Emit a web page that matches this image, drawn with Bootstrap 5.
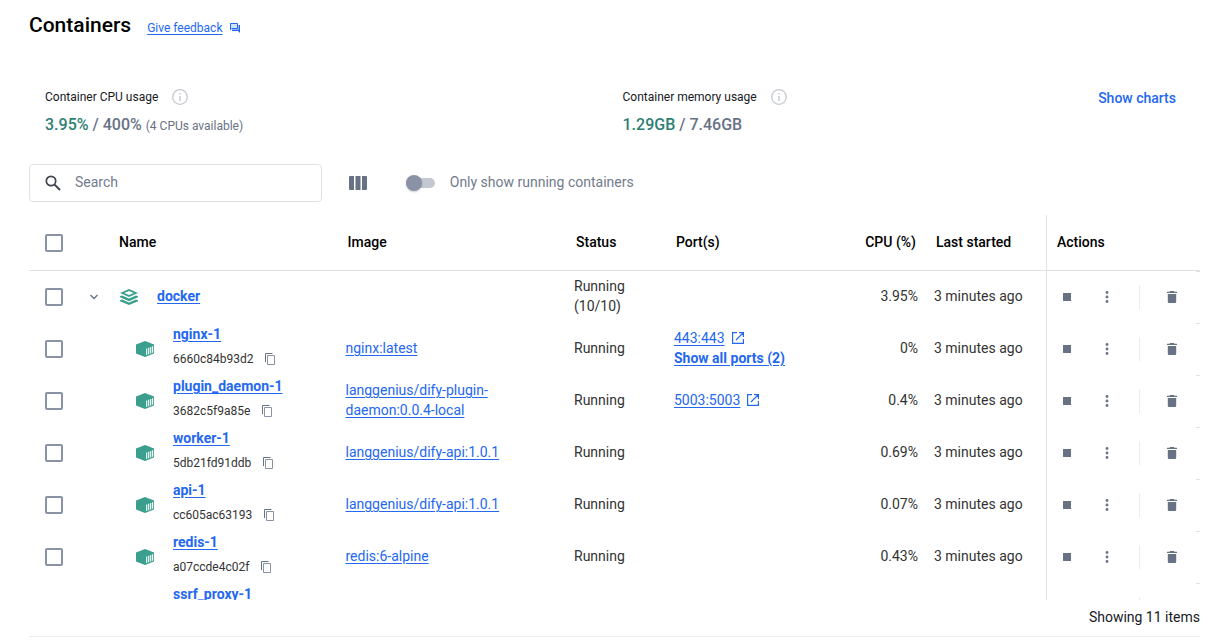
<!DOCTYPE html>
<html lang="en">
<head>
<meta charset="utf-8">
<meta name="viewport" content="width=device-width, initial-scale=1">
<title>Containers</title>
<link rel="stylesheet" href="https://cdn.jsdelivr.net/npm/bootstrap@5.3.0/dist/css/bootstrap.min.css">
<style>
  :root { --blue: #2468f0; --slate: #677285; --slate-light: #8993a5; --teal: #3a9f8c; --line: #e1e1e1; }
  body { font-family: Roboto, "Liberation Sans", sans-serif; font-size: 14px; line-height: 20px; color: #333; background: #fff; }
  a { color: var(--blue); text-underline-offset: 2px; }
  a:hover { color: #1a47b8; }
  svg { display: block; flex: none; fill: currentColor; }
  .page { padding: 11px 29px 6px; }
  .title { font-size: 21px; line-height: 28px; font-weight: 500; color: #000; }
  .feedback { font-size: 12px; padding-top: 6px; color: var(--blue); }
  .stats { display: grid; grid-template-columns: 1fr 1fr; column-gap: 16px; margin-top: 48px; }
  .stat-label { font-size: 12px; color: #17191e; gap: 14px; }
  .stat-value { font-size: 16px; line-height: 24px; font-weight: 500; color: var(--slate); margin-top: 6px; }
  .stat-value .used { color: #2e7f74; }
  .stat-value .note { font-size: 12px; font-weight: 400; }
  .info { color: #c4c8d0; }
  .charts { color: var(--blue); font-weight: 500; font-size: 14px; line-height: 22px; padding: 0 8px; }
  .toolbar { margin-top: 26px; }
  .search { height: 38px; border: 1px solid var(--line); border-radius: 4px; padding: 0 15px; gap: 14px; color: #3f444c; }
  .search input { border: 0; outline: 0; background: none; min-width: 0; color: #333; padding: 0 0 2px; }
  .search input::placeholder { color: #717b8c; opacity: 1; }
  .columns { margin-left: 27px; color: var(--slate); }
  .toggle { margin-left: 39px; gap: 15px; color: #717b8c; }
  .toggle label { padding-bottom: 2px; }
  .toggle input { appearance: none; margin: 0; width: 29px; height: 10px; border-radius: 5px; background: #c4c8d1; display: flex; align-items: center; }
  .toggle input::before { content: ""; flex: none; width: 16px; height: 16px; border-radius: 50%; background: var(--slate-light); box-shadow: 0 1px 2px #0003; }
  .toggle input:checked { justify-content: flex-end; background: #a9c1f8; }
  .list-area { margin-top: 13px; overflow: hidden; min-height: 0; }
  .containers { width: 100%; table-layout: fixed; border-collapse: separate; border-spacing: 0; }
  .containers th { height: 56px; padding: 0 10px 2px; font-weight: 500; color: #000; border-bottom: 1px solid var(--line); }
  .containers td { height: 52px; padding: 0 8px 2px; }
  .containers .actions { border-left: 1px solid var(--line); }
  .containers td.actions { padding: 0; background: linear-gradient(var(--line), var(--line)) top right / 4px 1px no-repeat; }
  .containers .tick { padding: 0 0 0 16px; }
  .tick input { appearance: none; display: block; width: 18px; height: 18px; margin: 0; border: 2px solid var(--slate-light); border-radius: 2px; }
  .tick input:checked { background: var(--blue); border-color: var(--blue); }
  .c-tick { width: 50px; } .c-open { width: 30px; } .c-status { width: 100px; } .c-ports { width: 160px; }
  .c-cpu { width: 100px; } .c-start { width: 120px; } .c-act { width: 154px; }
  .containers .open { padding: 0; }
  .containers .name { padding: 0 0 0 11px; }
  .containers .child { padding-left: 27px; }
  .name .d-flex { gap: 19px; }
  .name svg.kind { color: var(--teal); }
  .name a { font-weight: 700; }
  .name .group { margin-bottom: 2px; }
  .name .cid { font-size: 12px; line-height: 30px; gap: 12px; }
  .port { gap: 7px; color: var(--blue); }
  .plain { border: 0; padding: 0; background: none; color: var(--slate); }
  .act { width: 40px; height: 24px; display: flex; align-items: center; justify-content: center; }
  .rule { width: 1px; height: 24px; background: #ececec; margin: 0 12px; }
  .foot { color: #17191e; padding: 7px 0 9px; border-bottom: 1px solid #ededed; }
</style>
</head>
<body>
<svg width="0" height="0" class="position-absolute" aria-hidden="true">
  <symbol id="i-stack" viewBox="0 0 18 16"><path fill-rule="evenodd" d="M9 0 18 4 9 8 0 4ZM9 1.900 4.300 4 9 6.100 13.700 4ZM0 7.300 2 6.400 9 9.600 16 6.400 18 7.300V8.200L9 12.200 0 8.200ZM0 11.300 2 10.400 9 13.600 16 10.400 18 11.300V12.200L9 16 0 12.200Z"/></symbol>
  <symbol id="i-box" viewBox="0 0 18 16"><path d="M9 0 18 3.500V12.400L9 16 0 12.400V3.500Z"/><path d="M10.700 7.600V14M12.700 6.800V13.200M14.700 6V12.400M16.600 5.300V11.700" stroke="#fff" stroke-width="1.100"/></symbol>
  <symbol id="i-copy" viewBox="0 0 10 12"><path d="M.5 9V.5H7.500" fill="none" stroke="#677285"/><path d="M2.500 2.500H9.500V11.500H2.500Z" fill="none" stroke="#8993a5"/></symbol>
  <symbol id="i-stop" viewBox="0 0 8 8"><path d="M0 0H8V8H0Z"/></symbol>
  <symbol id="i-dots" viewBox="0 0 4 12"><circle cx="2" cy="1.500" r="1.400"/><circle cx="2" cy="6" r="1.400"/><circle cx="2" cy="10.500" r="1.400"/></symbol>
  <symbol id="i-trash" viewBox="0 0 10 12"><path d="M0 .7H2.500L3.200 0H6.800L7.500 .7H10V2H0ZM.8 3H9.200V10.700Q9.200 12 7.900 12H2.100Q.8 12 .8 10.700Z"/></symbol>
  <symbol id="i-out" viewBox="0 0 12 12"><path d="M5 .6H.6V11.400H11.400V7M7 .6H11.400V5M11.400 .6 4 8" fill="none" stroke="currentColor" stroke-width="1.200"/></symbol>
  <symbol id="i-info" viewBox="0 0 16 16"><circle cx="8" cy="8" r="7.300" fill="none" stroke="currentColor" stroke-width="1.300"/><path d="M7.300 4H8.700V5.500H7.300ZM7.300 7H8.700V12H7.300Z"/></symbol>
</svg>
<main class="page vh-100 d-flex flex-column">
  <header class="d-flex gap-3">
    <h1 class="title mb-0">Containers</h1>
    <div class="feedback d-flex align-items-center gap-2"><a href="#">Give feedback</a>
      <svg width="10" height="10" viewBox="0 0 10 10"><path d="M0 0H8V6H2L0 8Z" opacity=".2"/><path d="M.5 7V.5H7.500V5.500H1.500" fill="none" stroke="currentColor"/><path d="M8.500 2H10V10L8 8H2V6.500H8.500Z"/></svg>
    </div>
  </header>

  <section class="stats px-3">
    <div>
      <div class="stat-label d-flex align-items-center">Container CPU usage<svg class="info" width="16" height="16"><use href="#i-info"/></svg></div>
      <div class="stat-value"><span class="used">3.95%</span> / 400% <span class="note">(4 CPUs available)</span></div>
    </div>
    <div class="d-flex justify-content-between align-items-start">
      <div>
        <div class="stat-label d-flex align-items-center">Container memory usage<svg class="info" width="16" height="16"><use href="#i-info"/></svg></div>
        <div class="stat-value"><span class="used">1.29GB</span> / 7.46GB</div>
      </div>
      <button type="button" class="btn charts border-0">Show charts</button>
    </div>
  </section>

  <div class="toolbar d-flex align-items-center">
    <div class="search w-25 d-flex align-items-center">
      <svg width="16" height="16" viewBox="0 0 16 16"><circle cx="6" cy="6" r="4.700" fill="none" stroke="currentColor" stroke-width="1.700"/><path d="M9.600 9.600 15 15" stroke="currentColor" stroke-width="2"/></svg>
      <input type="search" class="flex-fill" placeholder="Search" aria-label="Search">
    </div>
    <button type="button" class="plain columns" aria-label="Choose columns"><svg width="18" height="14" viewBox="0 0 18 14"><path d="M1 0H5V14H1Q0 14 0 13V1Q0 0 1 0ZM6.500 0H11.500V14H6.500ZM13 0H17Q18 0 18 1V13Q18 14 17 14H13Z"/></svg></button>
    <div class="toggle d-flex align-items-center">
      <input type="checkbox" role="switch" id="running"><label for="running">Only show running containers</label>
    </div>
  </div>

  <div class="list-area flex-fill">
    <table class="containers">
      <colgroup><col class="c-tick"><col class="c-open"><col><col><col class="c-status"><col class="c-ports"><col class="c-cpu"><col class="c-start"><col class="c-act"></colgroup>
      <thead><tr>
        <th class="tick"><input type="checkbox" aria-label="Select all"></th><th></th><th>Name</th><th>Image</th><th>Status</th><th>Port(s)</th><th class="text-end">CPU (%)</th><th>Last started</th><th class="actions">Actions</th>
      </tr></thead>
      <tbody>
        <tr>
          <td class="tick"><input type="checkbox" aria-label="Select docker"></td>
          <td class="open"><button type="button" class="plain d-block mx-auto" aria-label="Collapse docker"><svg width="8" height="6" viewBox="0 0 8 6"><path d="M.5 1 4 4.500 7.500 1" fill="none" stroke="currentColor" stroke-width="1.400"/></svg></button></td>
          <td class="name"><div class="d-flex align-items-center"><svg class="kind" width="18" height="16"><use href="#i-stack"/></svg><a class="group" href="#">docker</a></div></td>
          <td></td><td>Running (10/10)</td><td></td><td class="text-end">3.95%</td><td>3 minutes ago</td>
          <td class="actions"><div class="d-flex align-items-center"><button type="button" class="plain act" aria-label="Stop"><svg width="8" height="8"><use href="#i-stop"/></svg></button><button type="button" class="plain act" aria-label="More"><svg width="4" height="12"><use href="#i-dots"/></svg></button><span class="rule"></span><button type="button" class="plain act" aria-label="Delete"><svg width="10" height="12"><use href="#i-trash"/></svg></button></div></td>
        </tr>
        <tr>
          <td class="tick"><input type="checkbox" aria-label="Select nginx-1"></td><td></td>
          <td class="name child"><div class="d-flex align-items-center"><svg class="kind" width="18" height="16"><use href="#i-box"/></svg><div><a href="#">nginx-1</a><div class="cid d-flex align-items-center">6660c84b93d2<button type="button" class="plain" aria-label="Copy id"><svg width="10" height="12"><use href="#i-copy"/></svg></button></div></div></div></td>
          <td><a href="#">nginx:latest</a></td><td>Running</td>
          <td><div class="port d-flex align-items-center"><a href="#">443:443</a><svg width="12" height="12"><use href="#i-out"/></svg></div><a class="fw-bold" href="#">Show all ports (2)</a></td>
          <td class="text-end">0%</td><td>3 minutes ago</td>
          <td class="actions"><div class="d-flex align-items-center"><button type="button" class="plain act" aria-label="Stop"><svg width="8" height="8"><use href="#i-stop"/></svg></button><button type="button" class="plain act" aria-label="More"><svg width="4" height="12"><use href="#i-dots"/></svg></button><span class="rule"></span><button type="button" class="plain act" aria-label="Delete"><svg width="10" height="12"><use href="#i-trash"/></svg></button></div></td>
        </tr>
        <tr>
          <td class="tick"><input type="checkbox" aria-label="Select plugin_daemon-1"></td><td></td>
          <td class="name child"><div class="d-flex align-items-center"><svg class="kind" width="18" height="16"><use href="#i-box"/></svg><div><a href="#">plugin_daemon-1</a><div class="cid d-flex align-items-center">3682c5f9a85e<button type="button" class="plain" aria-label="Copy id"><svg width="10" height="12"><use href="#i-copy"/></svg></button></div></div></div></td>
          <td><a href="#">langgenius/dify-plugin-daemon:0.0.4-local</a></td><td>Running</td>
          <td><div class="port d-flex align-items-center"><a href="#">5003:5003</a><svg width="12" height="12"><use href="#i-out"/></svg></div></td>
          <td class="text-end">0.4%</td><td>3 minutes ago</td>
          <td class="actions"><div class="d-flex align-items-center"><button type="button" class="plain act" aria-label="Stop"><svg width="8" height="8"><use href="#i-stop"/></svg></button><button type="button" class="plain act" aria-label="More"><svg width="4" height="12"><use href="#i-dots"/></svg></button><span class="rule"></span><button type="button" class="plain act" aria-label="Delete"><svg width="10" height="12"><use href="#i-trash"/></svg></button></div></td>
        </tr>
        <tr>
          <td class="tick"><input type="checkbox" aria-label="Select worker-1"></td><td></td>
          <td class="name child"><div class="d-flex align-items-center"><svg class="kind" width="18" height="16"><use href="#i-box"/></svg><div><a href="#">worker-1</a><div class="cid d-flex align-items-center">5db21fd91ddb<button type="button" class="plain" aria-label="Copy id"><svg width="10" height="12"><use href="#i-copy"/></svg></button></div></div></div></td>
          <td><a href="#">langgenius/dify-api:1.0.1</a></td><td>Running</td><td></td>
          <td class="text-end">0.69%</td><td>3 minutes ago</td>
          <td class="actions"><div class="d-flex align-items-center"><button type="button" class="plain act" aria-label="Stop"><svg width="8" height="8"><use href="#i-stop"/></svg></button><button type="button" class="plain act" aria-label="More"><svg width="4" height="12"><use href="#i-dots"/></svg></button><span class="rule"></span><button type="button" class="plain act" aria-label="Delete"><svg width="10" height="12"><use href="#i-trash"/></svg></button></div></td>
        </tr>
        <tr>
          <td class="tick"><input type="checkbox" aria-label="Select api-1"></td><td></td>
          <td class="name child"><div class="d-flex align-items-center"><svg class="kind" width="18" height="16"><use href="#i-box"/></svg><div><a href="#">api-1</a><div class="cid d-flex align-items-center">cc605ac63193<button type="button" class="plain" aria-label="Copy id"><svg width="10" height="12"><use href="#i-copy"/></svg></button></div></div></div></td>
          <td><a href="#">langgenius/dify-api:1.0.1</a></td><td>Running</td><td></td>
          <td class="text-end">0.07%</td><td>3 minutes ago</td>
          <td class="actions"><div class="d-flex align-items-center"><button type="button" class="plain act" aria-label="Stop"><svg width="8" height="8"><use href="#i-stop"/></svg></button><button type="button" class="plain act" aria-label="More"><svg width="4" height="12"><use href="#i-dots"/></svg></button><span class="rule"></span><button type="button" class="plain act" aria-label="Delete"><svg width="10" height="12"><use href="#i-trash"/></svg></button></div></td>
        </tr>
        <tr>
          <td class="tick"><input type="checkbox" aria-label="Select redis-1"></td><td></td>
          <td class="name child"><div class="d-flex align-items-center"><svg class="kind" width="18" height="16"><use href="#i-box"/></svg><div><a href="#">redis-1</a><div class="cid d-flex align-items-center">a07ccde4c02f<button type="button" class="plain" aria-label="Copy id"><svg width="10" height="12"><use href="#i-copy"/></svg></button></div></div></div></td>
          <td><a href="#">redis:6-alpine</a></td><td>Running</td><td></td>
          <td class="text-end">0.43%</td><td>3 minutes ago</td>
          <td class="actions"><div class="d-flex align-items-center"><button type="button" class="plain act" aria-label="Stop"><svg width="8" height="8"><use href="#i-stop"/></svg></button><button type="button" class="plain act" aria-label="More"><svg width="4" height="12"><use href="#i-dots"/></svg></button><span class="rule"></span><button type="button" class="plain act" aria-label="Delete"><svg width="10" height="12"><use href="#i-trash"/></svg></button></div></td>
        </tr>
        <tr>
          <td></td><td></td>
          <td class="name child"><div class="d-flex align-items-center"><svg class="kind" width="18" height="16"></svg><div><a href="#">ssrf_proxy-1</a><div class="cid">&nbsp;</div></div></div></td>
          <td></td><td></td><td></td><td></td><td></td>
          <td class="actions"><div class="d-flex align-items-center"><span class="act"></span><span class="act"></span><span class="rule"></span></div></td>
        </tr>
      </tbody>
    </table>
  </div>
  <footer class="foot text-end">Showing 11 items</footer>
</main>
<script src="https://cdn.jsdelivr.net/npm/bootstrap@5.3.0/dist/js/bootstrap.bundle.min.js"></script>
</body>
</html>
